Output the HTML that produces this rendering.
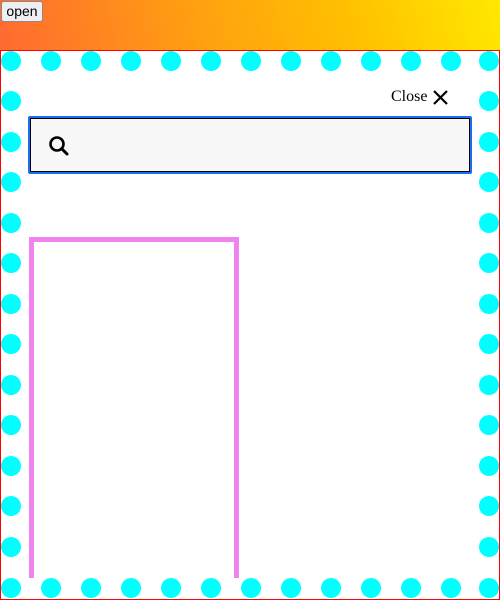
<!DOCTYPE html>
<html><head><style>
html,body{margin:0;padding:0;width:500px;height:600px;overflow:hidden;background:#fff;}
.top{position:absolute;left:0;top:0;width:500px;height:50px;background:linear-gradient(75deg,#ff6a30 0%,#ffa010 40%,#ffc000 70%,#ffe800 100%);}
.btn{position:absolute;left:1px;top:1px;width:42px;height:21px;box-sizing:border-box;border:1px solid #8a8a90;border-radius:3px;background:#efeff2;font:14px "Liberation Sans",sans-serif;color:#000;text-align:center;line-height:19px;}
.dlg{position:absolute;left:0;top:50px;width:500px;height:550px;box-sizing:border-box;border:1px solid red;}
.close{position:absolute;left:391px;top:88px;font:16px "Liberation Serif",serif;color:#000;}
.search{position:absolute;left:28px;top:116px;width:444px;height:58px;box-sizing:border-box;border:2px solid #1a6ff0;border-radius:2px;}
.search .in{position:absolute;left:0;top:0;right:0;bottom:0;border:1px solid #000;background:#f7f7f7;}
.pink{position:absolute;left:29px;top:237px;width:210px;height:341px;box-sizing:border-box;border:5px solid #ee82ee;border-bottom:none;}
svg{position:absolute;left:0;top:0;}
</style></head><body>
<div class="top"></div>
<div class="btn">open</div>
<div class="dlg"></div>
<div class="pink"></div>
<svg width="500" height="600">
<g fill="#00ffff">
<circle cx="11" cy="61" r="10"/><circle cx="51" cy="61" r="10"/><circle cx="91" cy="61" r="10"/><circle cx="131" cy="61" r="10"/><circle cx="171" cy="61" r="10"/><circle cx="211" cy="61" r="10"/><circle cx="251" cy="61" r="10"/><circle cx="291" cy="61" r="10"/><circle cx="331" cy="61" r="10"/><circle cx="371" cy="61" r="10"/><circle cx="411" cy="61" r="10"/><circle cx="451" cy="61" r="10"/><circle cx="489" cy="61" r="10"/>
<circle cx="11" cy="588" r="10"/><circle cx="51" cy="588" r="10"/><circle cx="91" cy="588" r="10"/><circle cx="131" cy="588" r="10"/><circle cx="171" cy="588" r="10"/><circle cx="211" cy="588" r="10"/><circle cx="251" cy="588" r="10"/><circle cx="291" cy="588" r="10"/><circle cx="331" cy="588" r="10"/><circle cx="371" cy="588" r="10"/><circle cx="411" cy="588" r="10"/><circle cx="451" cy="588" r="10"/><circle cx="489" cy="588" r="10"/>
<circle cx="11" cy="101" r="10"/><circle cx="11" cy="142" r="10"/><circle cx="11" cy="182" r="10"/><circle cx="11" cy="223" r="10"/><circle cx="11" cy="263" r="10"/><circle cx="11" cy="304" r="10"/><circle cx="11" cy="344" r="10"/><circle cx="11" cy="385" r="10"/><circle cx="11" cy="425" r="10"/><circle cx="11" cy="466" r="10"/><circle cx="11" cy="506" r="10"/><circle cx="11" cy="547" r="10"/>
<circle cx="489" cy="101" r="10"/><circle cx="489" cy="142" r="10"/><circle cx="489" cy="182" r="10"/><circle cx="489" cy="223" r="10"/><circle cx="489" cy="263" r="10"/><circle cx="489" cy="304" r="10"/><circle cx="489" cy="344" r="10"/><circle cx="489" cy="385" r="10"/><circle cx="489" cy="425" r="10"/><circle cx="489" cy="466" r="10"/><circle cx="489" cy="506" r="10"/><circle cx="489" cy="547" r="10"/>
</g>
</svg>
<div class="search"><div class="in"></div></div>
<svg width="500" height="600">
<circle cx="57" cy="144" r="6.5" fill="none" stroke="#000" stroke-width="2.6"/>
<line x1="62" y1="149" x2="67" y2="154" stroke="#000" stroke-width="3" stroke-linecap="round"/>
<path d="M434 91 L447 104 M447 91 L434 104" stroke="#000" stroke-width="2.2"/>
</svg>
<div class="close">Close</div>
</body></html>
